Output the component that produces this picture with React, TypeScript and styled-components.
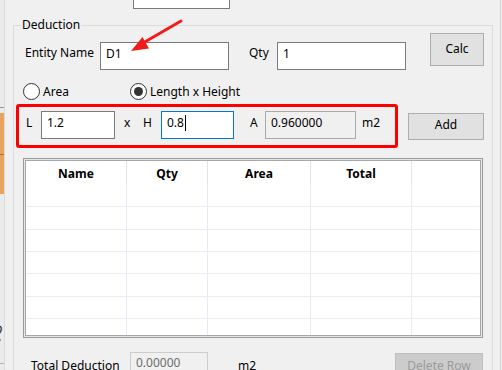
import React from "react";
import styled, { createGlobalStyle, css } from "styled-components";

const Global = createGlobalStyle`
  html, body { margin: 0; padding: 0; background: #f0f0f0; }
  body { font-family: "Noto Sans", "Liberation Sans", sans-serif; font-size: 12px; color: #000; }
  * { box-sizing: border-box; }
`;

const Screen = styled.div`
  position: relative;
  width: 502px;
  height: 370px;
  overflow: hidden;
  background: #f0f0f0;
  display: flex;
`;

/* ---------- left clipped window strip ---------- */
const LeftStrip = styled.div`
  width: 13px;
  flex: none;
  display: flex;
`;
const LeftInner = styled.div`
  width: 5px;
  display: flex;
  flex-direction: column;
  background: #ebebeb;
  border-right: 1px solid #dadada;
  overflow: hidden;
`;
const Gap = styled.div<{ $h: number }>`
  height: ${(p) => p.$h}px;
  flex: none;
`;
const HLine = styled.div<{ $c: string }>`
  height: 1px;
  flex: none;
  background: ${(p) => p.$c};
`;
const Orange = styled.div<{ $h: number }>`
  height: ${(p) => p.$h}px;
  flex: none;
  background: #e8a45f;
`;
const Glyph = styled.div`
  height: 26px;
  flex: none;
  margin-left: -9px;
  font-family: "Liberation Serif", serif;
  font-style: italic;
  font-size: 26px;
  line-height: 26px;
  color: #222;
`;

/* ---------- main ---------- */
const Main = styled.div`
  width: 480px;
  flex: none;
  display: flex;
  flex-direction: column;
`;
const TopBox = styled.div`
  margin-left: 120px;
  width: 97px;
  height: 9px;
  flex: none;
  background: #fff;
  border: 1px solid #7a7a7a;
  border-top: none;
`;
const RightStrip = styled.div`
  width: 8px;
  flex: none;
  border-right: 1px solid #d4d4d4;
`;

const Group = styled.div`
  position: relative;
  margin-top: 16px;
  flex: 1;
  border: 1px solid #dcdcdc;
  border-bottom: none;
  display: flex;
  flex-direction: column;
`;
const Legend = styled.div`
  position: absolute;
  top: -9px;
  left: 7px;
  padding: 0 1px;
  line-height: 16px;
  background: #f0f0f0;
`;

const Row = styled.div<{ $mt: number; $pl: number }>`
  display: flex;
  align-items: flex-start;
  margin-top: ${(p) => p.$mt}px;
  padding-left: ${(p) => p.$pl}px;
  flex: none;
`;

const Label = styled.div<{ $w?: number; $ml?: number; $mt?: number; $h?: number }>`
  flex: none;
  width: ${(p) => (p.$w ? `${p.$w}px` : "auto")};
  margin-left: ${(p) => p.$ml ?? 0}px;
  margin-top: ${(p) => p.$mt ?? 0}px;
  height: ${(p) => p.$h ?? 28}px;
  padding-bottom: 4px;
  display: flex;
  align-items: center;
  line-height: 16px;
  white-space: nowrap;
`;

type BoxKind = "normal" | "focused" | "readonly" | "disabled";
const TextBox = styled.div<{ $w: number; $ml?: number; $mt?: number; $h?: number; $kind?: BoxKind }>`
  flex: none;
  position: relative;
  width: ${(p) => p.$w}px;
  height: ${(p) => p.$h ?? 28}px;
  margin-left: ${(p) => p.$ml ?? 0}px;
  margin-top: ${(p) => p.$mt ?? 0}px;
  padding: 0 5px 4px;
  display: flex;
  align-items: center;
  line-height: 16px;
  background: #fff;
  border: 1px solid #7a7a7a;
  ${(p) =>
    p.$kind === "focused" &&
    css`
      border-color: #0078d7;
    `}
  ${(p) =>
    p.$kind === "readonly" &&
    css`
      background: #f0f0f0;
      border-color: #a9a9a9;
    `}
  ${(p) =>
    p.$kind === "disabled" &&
    css`
      background: #f0f0f0;
      border-color: #cccccc;
      color: #6d6d6d;
    `}
`;
const Caret = styled.span`
  display: inline-block;
  width: 1px;
  height: 16px;
  background: #000;
  margin-left: 1px;
`;

const Button = styled.div<{ $w: number; $h: number; $ml?: number; $mt?: number; $disabled?: boolean }>`
  flex: none;
  width: ${(p) => p.$w}px;
  height: ${(p) => p.$h}px;
  margin-left: ${(p) => p.$ml ?? 0}px;
  margin-top: ${(p) => p.$mt ?? 0}px;
  display: flex;
  align-items: center;
  justify-content: center;
  padding-bottom: 2px;
  background: ${(p) => (p.$disabled ? "#cccccc" : "#e1e1e1")};
  border: 1px solid ${(p) => (p.$disabled ? "#bfbfbf" : "#adadad")};
  color: ${(p) => (p.$disabled ? "#9a9a9a" : "#000")};
  line-height: 16px;
`;

const Radio = styled.div<{ $w?: number }>`
  flex: none;
  width: ${(p) => (p.$w ? `${p.$w}px` : "auto")};
  display: flex;
  align-items: center;
  gap: 3px;
  height: 17px;
  line-height: 16px;
`;
const RadioCircle = styled.div<{ $checked?: boolean }>`
  width: 17px;
  height: 17px;
  border-radius: 50%;
  border: 1px solid #333;
  background: #fff;
  display: flex;
  align-items: center;
  justify-content: center;
  &::after {
    content: "";
    display: ${(p) => (p.$checked ? "block" : "none")};
    width: 9px;
    height: 9px;
    border-radius: 50%;
    background: #333;
  }
`;

const RedBox = styled.div`
  flex: none;
  width: 382px;
  height: 44px;
  margin-left: 2px;
  border: 3px solid #ff0000;
  border-radius: 3px;
  display: flex;
  align-items: center;
  padding-bottom: 2px;
`;
const Row3 = styled.div`
  display: flex;
  align-items: center;
  margin-top: 4px;
  flex: none;
`;

/* ---------- grid ---------- */
const GridOuter = styled.div`
  flex: none;
  margin: 10px 0 0 9px;
  width: 460px;
  height: 180px;
  border: 1px solid #9b9b9b;
  background: #e6e6e6;
  padding: 1px;
`;
const GridInner = styled.div`
  width: 100%;
  height: 100%;
  border: 1px solid #a8a8a8;
  background: #fff;
  overflow: hidden;
  display: grid;
  grid-template-columns: 101px 81px 103px 101px 68px;
  grid-auto-rows: min-content;
`;
const HeadCell = styled.div<{ $last?: boolean }>`
  height: 23px;
  border-right: 1px solid ${(p) => (p.$last ? "transparent" : "#e3e3e3")};
  font-weight: 700;
  display: flex;
  align-items: center;
  justify-content: center;
  padding-top: 3px;
  line-height: 16px;
`;
const Cell = styled.div<{ $h: number; $last?: boolean }>`
  height: ${(p) => p.$h}px;
  border-right: 1px solid ${(p) => (p.$last ? "transparent" : "#e4ebf4")};
  border-bottom: 1px solid #ececec;
`;

const BottomRow = styled.div`
  display: flex;
  align-items: flex-start;
  margin-top: 14px;
  padding-left: 17px;
  padding-right: 9px;
  flex: none;
`;
const PlainText = styled.div<{ $w?: number; $ml?: number; $mt?: number }>`
  flex: none;
  width: ${(p) => (p.$w ? `${p.$w}px` : "auto")};
  margin-left: ${(p) => p.$ml ?? 0}px;
  margin-top: ${(p) => p.$mt ?? 0}px;
  line-height: 16px;
  white-space: nowrap;
`;
const Spacer = styled.div`
  flex: 1;
`;

const Overlay = styled.svg`
  position: absolute;
  left: 0;
  top: 0;
  pointer-events: none;
`;

const rowHeights = [23, 23, 22, 22, 23, 22, 22];
const headers = ["Name", "Qty", "Area", "Total", ""];

export default function App() {
  return (
    <>
      <Global />
      <Screen>
        <LeftStrip>
          <LeftInner>
            <Gap $h={107} />
            <HLine $c="#9a9a9a" />
            <Gap $h={5} />
            <Orange $h={41} />
            <HLine $c="#a8743e" />
            <Orange $h={39} />
            <Gap $h={128} />
            <Glyph>ℓ</Glyph>
            <Gap $h={15} />
            <HLine $c="#b0b0b0" />
          </LeftInner>
        </LeftStrip>
        <Main>
          <TopBox />
          <Group>
            <Legend>Deduction</Legend>
            <Row $mt={7} $pl={11}>
              <Label $w={75} $mt={8}>Entity Name</Label>
              <TextBox $w={129} $mt={9}>D1</TextBox>
              <Label $w={28} $ml={20} $mt={8}>Qty</Label>
              <TextBox $w={129} $mt={9}>1</TextBox>
              <Button $w={54} $h={33} $ml={24}>Calc</Button>
            </Row>
            <Row $mt={13} $pl={9}>
              <Radio $w={107}>
                <RadioCircle />
                Area
              </Radio>
              <Radio>
                <RadioCircle $checked />
                Length x Height
              </Radio>
            </Row>
            <Row3>
              <RedBox>
                <Label $w={15} $ml={7}>L</Label>
                <TextBox $w={74}>1.2</TextBox>
                <Label $w={10} $ml={9}>x</Label>
                <Label $w={10} $ml={9}>H</Label>
                <TextBox $w={73} $ml={8} $kind="focused">
                  0.8
                  <Caret />
                </TextBox>
                <Label $w={10} $ml={16}>A</Label>
                <TextBox $w={91} $ml={5} $kind="readonly">0.960000</TextBox>
                <Label $ml={6}>m2</Label>
              </RedBox>
              <Button $w={76} $h={27} $ml={10}>Add</Button>
            </Row3>
            <GridOuter>
              <GridInner>
                {headers.map((h, i) => (
                  <HeadCell key={`h${i}`} $last={i === 4}>
                    {h}
                  </HeadCell>
                ))}
                {rowHeights.map((rh, r) =>
                  headers.map((_, c) => <Cell key={`c${r}-${c}`} $h={rh} $last={c === 4} />)
                )}
              </GridInner>
            </GridOuter>
            <BottomRow>
              <PlainText $w={99} $mt={6}>Total Deduction</PlainText>
              <TextBox $w={78} $h={26} $kind="disabled">0.00000</TextBox>
              <PlainText $ml={30} $mt={6}>m2</PlainText>
              <Spacer />
              <Button $w={88} $h={27} $mt={1} $disabled>
                Delete Row
              </Button>
            </BottomRow>
          </Group>
        </Main>
        <RightStrip />
        <Overlay width={502} height={370} viewBox="0 0 502 370">
          <line x1={181} y1={21} x2={143} y2={43} stroke="#f01c1c" strokeWidth={3} strokeLinecap="round" />
          <polygon points="131,51 149,48.5 142.5,37" fill="#f01c1c" />
        </Overlay>
      </Screen>
    </>
  );
}
